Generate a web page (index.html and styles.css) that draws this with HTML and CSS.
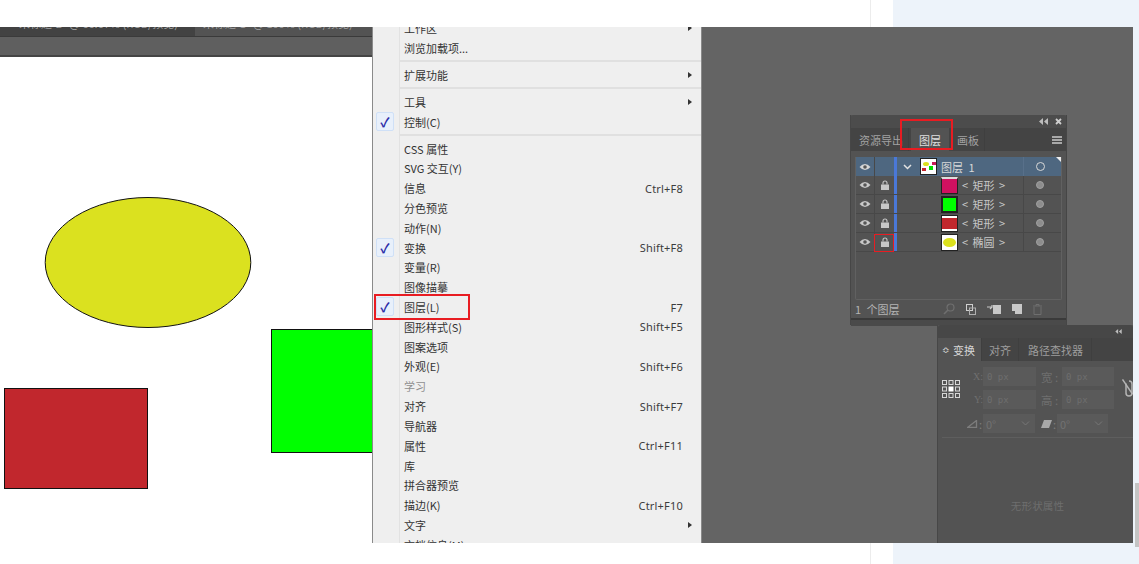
FILE: index.html
```html
<!DOCTYPE html>
<html lang="zh-CN">
<head>
<meta charset="utf-8">
<title>图层面板</title>
<link rel="stylesheet" href="styles.css">
</head>
<body>
<div class="page">
  <div class="article"></div>
  <div class="gutter"></div>
  <div class="side"></div>
  <div class="scroll-thumb"></div>

  <div class="shot">
    <div class="tabbar">
      <div class="doc-tab first"><span>未标题-2* @ 66.67% (RGB/预览)</span></div>
      <div class="doc-tab second"><span>未标题-1* @ 100% (RGB/预览)</span></div>
    </div>
    <div class="ruler"></div>
    <div class="doc"></div>

    <svg class="art" width="372" height="516" viewBox="0 0 372 516">
      <ellipse cx="148" cy="235.500" rx="102.800" ry="65" fill="#dbe11f" stroke="#111" stroke-width="1"/>
      <rect x="271.500" y="302.500" width="102" height="123" fill="#00ff00" stroke="#111" stroke-width="1"/>
      <rect x="4.500" y="361.500" width="143" height="100" fill="#c1272d" stroke="#111" stroke-width="1"/>
    </svg>

    <div class="menu">
      <div class="menu-list">
        <div class="item"><span class="label">工作区</span><i class="arrow"></i></div>
        <div class="item"><span class="label">浏览加载项...</span></div>
        <div class="sep"></div>
        <div class="item"><span class="label">扩展功能</span><i class="arrow"></i></div>
        <div class="sep"></div>
        <div class="item"><span class="label">工具</span><i class="arrow"></i></div>
        <div class="item"><b class="check">✓</b><span class="label">控制(C)</span></div>
        <div class="sep"></div>
        <div class="item"><span class="label">CSS 属性</span></div>
        <div class="item"><span class="label">SVG 交互(Y)</span></div>
        <div class="item"><span class="label">信息</span><span class="key">Ctrl+F8</span></div>
        <div class="item"><span class="label">分色预览</span></div>
        <div class="item"><span class="label">动作(N)</span></div>
        <div class="item"><b class="check">✓</b><span class="label">变换</span><span class="key">Shift+F8</span></div>
        <div class="item"><span class="label">变量(R)</span></div>
        <div class="item"><span class="label">图像描摹</span></div>
        <div class="item"><b class="check">✓</b><span class="label">图层(L)</span><span class="key">F7</span></div>
        <div class="item"><span class="label">图形样式(S)</span><span class="key">Shift+F5</span></div>
        <div class="item"><span class="label">图案选项</span></div>
        <div class="item"><span class="label">外观(E)</span><span class="key">Shift+F6</span></div>
        <div class="item off"><span class="label">学习</span></div>
        <div class="item"><span class="label">对齐</span><span class="key">Shift+F7</span></div>
        <div class="item"><span class="label">导航器</span></div>
        <div class="item"><span class="label">属性</span><span class="key">Ctrl+F11</span></div>
        <div class="item"><span class="label">库</span></div>
        <div class="item"><span class="label">拼合器预览</span></div>
        <div class="item"><span class="label">描边(K)</span><span class="key">Ctrl+F10</span></div>
        <div class="item"><span class="label">文字</span><i class="arrow"></i></div>
        <div class="item"><span class="label">文档信息(M)</span></div>
      </div>
    </div>
    <div class="mark mark-menu"></div>

    <section class="panel layers">
      <header class="panel-top">
        <svg width="9" height="7" viewBox="0 0 9 7"><path d="M4 0v7L0 3.500zM9 0v7L5 3.500z" fill="#bdbdbd"/></svg>
        <svg width="7" height="7" viewBox="0 0 7 7"><path d="M1 1l5 5M6 1l-5 5" stroke="#cfcfcf" stroke-width="1.800"/></svg>
      </header>
      <nav class="panel-tabs">
        <span class="ptab">资源导出</span>
        <span class="ptab on">图层</span>
        <span class="ptab">画板</span>
        <span class="burger"></span>
      </nav>
      <div class="layer-list">
        <div class="row top">
          <span class="cell-eye"><svg class="eye" width="12" height="8" viewBox="0 0 12 8"><path d="M0.500 4Q6 -2 11.500 4Q6 10 0.500 4z" fill="#d6d6d6"/><circle cx="6" cy="4" r="1.800" fill="#555"/></svg></span>
          <span class="cell-lock"></span>
          <span class="bar"></span>
          <svg class="chev" width="9" height="6" viewBox="0 0 9 6"><path d="M1 1l3.500 3.500L8 1" fill="none" stroke="#e2e2e2" stroke-width="1.500"/></svg>
          <span class="thumb thumb-all"><i class="t1"></i><i class="t2"></i><i class="t3"></i><i class="t4"></i></span>
          <span class="name layer-name">图层 1</span>
          <span class="cell-target"><i class="ring"></i></span>
          <i class="corner"></i>
        </div>
        <div class="row">
          <span class="cell-eye"><svg class="eye" width="12" height="8" viewBox="0 0 12 8"><path d="M0.500 4Q6 -2 11.500 4Q6 10 0.500 4z" fill="#c8c8c8"/><circle cx="6" cy="4" r="1.800" fill="#555"/></svg></span>
          <span class="cell-lock"><svg width="8" height="10" viewBox="0 0 8 10"><path d="M2 4.500V3a2 2 0 0 1 4 0v1.500" fill="none" stroke="#c8c8c8" stroke-width="1.100"/><rect y="4.500" width="8" height="5.500" fill="#c8c8c8"/></svg></span>
          <span class="bar"></span>
          <span class="thumb thumb-pink"></span>
          <span class="name">&lt; 矩形 &gt;</span>
          <span class="cell-target"><i class="dot"></i></span>
        </div>
        <div class="row">
          <span class="cell-eye"><svg class="eye" width="12" height="8" viewBox="0 0 12 8"><path d="M0.500 4Q6 -2 11.500 4Q6 10 0.500 4z" fill="#c8c8c8"/><circle cx="6" cy="4" r="1.800" fill="#555"/></svg></span>
          <span class="cell-lock"><svg width="8" height="10" viewBox="0 0 8 10"><path d="M2 4.500V3a2 2 0 0 1 4 0v1.500" fill="none" stroke="#c8c8c8" stroke-width="1.100"/><rect y="4.500" width="8" height="5.500" fill="#c8c8c8"/></svg></span>
          <span class="bar"></span>
          <span class="thumb thumb-green"></span>
          <span class="name">&lt; 矩形 &gt;</span>
          <span class="cell-target"><i class="dot"></i></span>
        </div>
        <div class="row">
          <span class="cell-eye"><svg class="eye" width="12" height="8" viewBox="0 0 12 8"><path d="M0.500 4Q6 -2 11.500 4Q6 10 0.500 4z" fill="#c8c8c8"/><circle cx="6" cy="4" r="1.800" fill="#555"/></svg></span>
          <span class="cell-lock"><svg width="8" height="10" viewBox="0 0 8 10"><path d="M2 4.500V3a2 2 0 0 1 4 0v1.500" fill="none" stroke="#c8c8c8" stroke-width="1.100"/><rect y="4.500" width="8" height="5.500" fill="#c8c8c8"/></svg></span>
          <span class="bar"></span>
          <span class="thumb thumb-red"></span>
          <span class="name">&lt; 矩形 &gt;</span>
          <span class="cell-target"><i class="dot"></i></span>
        </div>
        <div class="row">
          <span class="cell-eye"><svg class="eye" width="12" height="8" viewBox="0 0 12 8"><path d="M0.500 4Q6 -2 11.500 4Q6 10 0.500 4z" fill="#c8c8c8"/><circle cx="6" cy="4" r="1.800" fill="#555"/></svg></span>
          <span class="cell-lock"><svg width="8" height="10" viewBox="0 0 8 10"><path d="M2 4.500V3a2 2 0 0 1 4 0v1.500" fill="none" stroke="#c8c8c8" stroke-width="1.100"/><rect y="4.500" width="8" height="5.500" fill="#c8c8c8"/></svg></span>
          <span class="bar"></span>
          <span class="thumb thumb-ellipse"><i></i></span>
          <span class="name">&lt; 椭圆 &gt;</span>
          <span class="cell-target"><i class="dot"></i></span>
        </div>
      </div>
      <footer class="layer-foot">
        <span class="count">1 个图层</span>
        <span class="tools">
          <svg width="12" height="12" viewBox="0 0 12 12"><circle cx="7.500" cy="4.500" r="3.500" fill="none" stroke="#6f6f6f" stroke-width="1.200"/><path d="M5 7l-4 4" stroke="#6f6f6f" stroke-width="1.600"/></svg>
          <svg width="10" height="11" viewBox="0 0 10 11"><rect x="0.500" y="0.500" width="6" height="6" fill="#555" stroke="#cfcfcf"/><rect x="3.500" y="4" width="6" height="6.500" fill="none" stroke="#b0b0b0"/></svg>
          <svg width="14" height="10" viewBox="0 0 14 10"><rect x="6" y="1" width="8" height="9" fill="#c8c8c8"/><path d="M0 3h5v-2M5 3l-2 2" fill="none" stroke="#c8c8c8" stroke-width="1.200"/></svg>
          <svg width="10" height="10" viewBox="0 0 10 10"><path d="M0 0h10v10H3V7H0z" fill="#c8c8c8"/></svg>
          <svg width="9" height="11" viewBox="0 0 9 11"><path d="M0 2h9M3 2V0.500h3V2M1 3v7.500h7V3" fill="none" stroke="#6f6f6f"/></svg>
        </span>
      </footer>
      <div class="grip"></div>
    </section>

    <section class="panel transform">
      <header class="panel-top short">
        <svg width="7" height="5" viewBox="0 0 9 7"><path d="M4 0v7L0 3.500zM9 0v7L5 3.500z" fill="#bdbdbd"/></svg>
      </header>
      <nav class="panel-tabs tabs-two">
        <span class="ptab on"><em class="updown">≎</em>变换</span>
        <span class="ptab">对齐</span>
        <span class="ptab">路径查找器</span>
      </nav>
      <div class="fields">
        <svg class="refpoint" width="18" height="18" viewBox="0 0 18 18">
          <g fill="none" stroke="#d6d6d6"><rect x="0.500" y="0.500" width="4" height="4"/><rect x="7" y="0.500" width="4" height="4"/><rect x="13.500" y="0.500" width="4" height="4"/><rect x="0.500" y="7" width="4" height="4"/><rect x="13.500" y="7" width="4" height="4"/><rect x="0.500" y="13.500" width="4" height="4"/><rect x="7" y="13.500" width="4" height="4"/><rect x="13.500" y="13.500" width="4" height="4"/></g>
          <rect x="6.500" y="6.500" width="5" height="5" fill="#fff"/>
        </svg>
        <div class="field-grid">
          <span class="f-label">X:</span><span class="field">0 px</span>
          <span class="f-label wide">宽 :</span><span class="field">0 px</span>
          <span class="f-label">Y:</span><span class="field">0 px</span>
          <span class="f-label wide">高 :</span><span class="field">0 px</span>
        </div>
        <div class="select-row">
          <svg width="11" height="8" viewBox="0 0 11 8"><path d="M0.500 7.500L9.500 0.500v7z" fill="none" stroke="#7d7d7d" stroke-width="1.300"/></svg><span class="colon">:</span>
          <span class="select">0°<svg width="9" height="5" viewBox="0 0 9 5"><path d="M1 0.500l3.500 3.500L8 0.500" fill="none" stroke="#777"/></svg></span>
          <svg class="skew" width="11" height="8" viewBox="0 0 11 8"><path d="M3 0h8L8 8H0z" fill="#a8a8a8"/></svg><span class="colon">:</span>
          <span class="select s2">0°<svg width="9" height="5" viewBox="0 0 9 5"><path d="M1 0.500l3.500 3.500L8 0.500" fill="none" stroke="#777"/></svg></span>
        </div>
        <svg class="chain" width="11" height="18" viewBox="0 0 11 18"><g fill="none" stroke="#b4b4b4" stroke-width="1.500"><path d="M0.500 0.500L10.500 15"/><path d="M4 4.500V14a3 3 0 0 0 6 0V5a3 3 0 0 0-3-3"/></g></svg>
      </div>
      <div class="empty">无形状属性</div>
    </section>

    <div class="mark mark-tab"></div>
    <div class="mark mark-lock"></div>
  </div>
</div>
</body>
</html>
```
FILE: styles.css
```css
html, body { margin: 0; padding: 0; background: #fff; }
body { font-family: "Noto Sans CJK SC", "Liberation Sans", sans-serif; }
.page { position: relative; display: flex; width: 1139px; height: 564px; overflow: hidden; }
.article { width: 870px; background: #fff; }
.gutter { width: 22px; background: #fff; border-left: 1px solid #ececec; }
.side { flex: 1; background: #edf3fa; }
.scroll-thumb { position: absolute; left: 1135px; top: 483px; width: 4px; height: 64px; background: #c4c4c4; }

.shot { position: absolute; left: 0; top: 27px; width: 1133px; height: 516px; overflow: hidden; background: #646464; }
.tabbar { display: flex; width: 372px; height: 10px; background: #424242; border-bottom: 1px solid #3a3a3a; box-sizing: border-box; }
.doc-tab { height: 9px; overflow: hidden; font-size: 11px; line-height: 11px; color: #a4a4a4; white-space: nowrap; }
.doc-tab span { display: block; margin-top: -9px; }
.doc-tab.first { width: 195px; padding-left: 19px; box-sizing: border-box; }
.doc-tab.second { width: 177px; padding-left: 8px; box-sizing: border-box; background: #535353; }
.ruler { width: 372px; height: 20px; background: #5f5f5f; border-bottom: 2px solid #444; box-sizing: border-box; }
.doc { width: 372px; height: 486px; background: #fff; }
.art { position: absolute; left: 0; top: 0; }

.menu { position: absolute; left: 372px; top: 0; width: 330px; height: 516px; box-sizing: border-box; overflow: hidden; background: #efefef; border-left: 1px solid #8a8a8a; border-right: 1px solid #8a8a8a; }
.menu::before { content: ""; position: absolute; left: 26px; top: 0; bottom: 0; width: 1px; background: #e2e2e2; }
.menu-list { margin-top: -9px; padding-left: 27px; }
.item { position: relative; display: flex; align-items: center; height: 19.820px; padding-left: 4px; padding-right: 18px; font-size: 11px; color: #333; }
.item .label { flex: 1; white-space: nowrap; }
.item.off { color: #8f8f8f; }
.key { color: #3c3c3c; letter-spacing: 0.200px; font-family: "Noto Sans", "Liberation Sans", sans-serif; }
.arrow { width: 0; height: 0; margin-right: -9px; border-left: 4px solid #333; border-top: 3px solid transparent; border-bottom: 3px solid transparent; }
.sep { height: 2px; margin: 2.600px 0; background: #e0e0e0; }
.check { position: absolute; left: -24px; top: 0; width: 18px; height: 19px; box-sizing: border-box; text-align: center; line-height: 18px; font-size: 13px; color: #2b2ba8; background: #e8f0fb; border: 1px solid #cfe0f7; border-radius: 2px; }

.mark { position: absolute; box-sizing: border-box; border: 2px solid #e81c22; pointer-events: none; }
.mark-menu { left: 374px; top: 267px; width: 96px; height: 26px; }
.mark-tab { left: 900px; top: 92px; width: 53px; height: 31px; }
.mark-lock { left: 874px; top: 207px; width: 20px; height: 18px; border-width: 1px; }

.panel { position: absolute; box-sizing: border-box; background: #535353; color: #c4c4c4; }
.panel-top { display: flex; justify-content: flex-end; align-items: center; gap: 7px; height: 13px; padding-right: 4px; background: #4c4c4c; border-radius: 3px 3px 0 0; }
.panel-tabs { display: flex; align-items: stretch; height: 23px; background: #444; font-size: 11px; }
.ptab { display: flex; align-items: center; padding: 0 6px; color: #a2a2a2; border-right: 1px solid #3f3f3f; white-space: nowrap; }
.ptab.on { background: #535353; color: #e0e0e0; }

.layers { left: 850px; top: 88px; width: 217px; height: 210px; border: 1px solid #464646; border-top: 0; }
.layers .panel-tabs { padding-left: 3px; }
.layers .ptab { padding: 0 5px; }
.layers .ptab.on { width: 38px; margin-left: 2px; box-sizing: border-box; justify-content: center; padding: 0; border-right: 0; }
.layers .ptab.on + .ptab { padding-left: 8px; }
.burger { margin-left: auto; margin-right: 4px; margin-top: 8px; width: 10px; height: 2px; background: #a8a8a8; box-shadow: 0 3px 0 #a8a8a8, 0 6px 0 #a8a8a8; }
.layer-list { margin: 6px 4px 0 4px; height: 143px; border: 1px solid #616161; border-top: 0; border-radius: 0 0 2px 2px; box-sizing: border-box; }
.row { position: relative; display: flex; align-items: center; height: 19px; border-bottom: 1px solid #484848; box-sizing: border-box; font-size: 11px; color: #c8c8c8; }
.row.top { background: #4e6780; border-bottom: 0; color: #d8d8d8; }
.cell-eye { display: flex; justify-content: center; align-items: center; width: 19px; height: 100%; border-right: 1px solid #484848; box-sizing: border-box; }
.cell-lock { display: flex; justify-content: center; align-items: center; width: 19px; height: 100%; box-sizing: border-box; }
.bar { width: 3px; height: 100%; background: #4a78d8; margin-right: 2px; flex: none; }
.chev { margin-left: 4px; margin-right: 8px; }
.thumb { position: relative; display: block; flex: none; width: 17px; height: 17px; box-sizing: border-box; border: 1px solid #222; background: #fff; }
.row:not(.top) .thumb { margin-left: 42px; }
.thumb-pink { background: #cf1160; border-top: 2px solid #ddd; }
.thumb-green { background: #00ff00; border: 2px solid #222; }
.thumb-red { background: #c1272d; border-top: 3px solid #fff; border-bottom: 3px solid #fff; outline: 1px solid #222; outline-offset: -1px; }
.thumb-ellipse i { position: absolute; left: 1px; top: 3px; width: 13px; height: 9px; border-radius: 50%; background: #dce21e; }
.thumb-all i { position: absolute; display: block; }
.t1 { left: 2px; top: 3px; width: 6px; height: 4px; border-radius: 50%; background: #dce21e; }
.t2 { left: 8px; top: 7px; width: 4px; height: 4px; background: #00e000; }
.t3 { left: 1px; top: 9px; width: 4px; height: 3px; background: #c1272d; }
.t4 { left: 11px; top: 3px; width: 4px; height: 3px; background: #c81a5a; }
.name { margin-left: 4px; flex: 1; white-space: nowrap; word-spacing: 2px; }
.layer-name { word-spacing: 3px; }
.cell-target { display: flex; justify-content: center; align-items: center; width: 33px; height: 100%; border-left: 1px solid #484848; box-sizing: border-box; margin-right: 5px; }
.row.top .cell-target { border-left-color: #58708a; }
.ring { width: 7px; height: 7px; border-radius: 50%; border: 1px solid #d8d8d8; }
.dot { width: 8px; height: 8px; border-radius: 50%; background: #8d8d8d; border: 1px solid #a0a0a0; box-sizing: border-box; }
.corner { position: absolute; right: 0; top: 0; width: 0; height: 0; border-top: 5px solid #eee; border-left: 5px solid transparent; }
.layer-foot { display: flex; align-items: center; justify-content: space-between; height: 18px; padding: 0 24px 0 4px; font-size: 11px; color: #b4b4b4; word-spacing: 3px; }
.tools { display: flex; align-items: center; gap: 11px; }
.grip { height: 8px; background: #4a4a4a; border-top: 2px solid #3a3a3a; box-sizing: border-box; }

.transform { left: 937px; top: 298px; width: 196px; height: 218px; border-left: 1px solid #474747; }
.panel-top.short { padding-right: 11px; background: #474747; }
.tabs-two { font-size: 11px; }
.tabs-two .ptab { padding: 0 7px; color: #9d9d9d; }
.tabs-two .ptab.on { padding: 0 6px 0 4px; color: #d6d6d6; }
.tabs-two .ptab:last-child { padding: 0 8px 0 9px; }
.updown { font-style: normal; margin-right: 3px; font-size: 9px; }
.fields { position: relative; height: 77px; margin-left: 4px; padding: 6px 0 0 41px; border-bottom: 1px solid #5e5e5e; box-sizing: border-box; }
.refpoint { position: absolute; left: 0; top: 19px; }
.chain { position: absolute; left: 180px; top: 18px; }
.field-grid { display: grid; grid-template-columns: 0 53px 26px 52px; grid-auto-rows: 19px; row-gap: 4px; font-family: "Liberation Serif", serif; font-size: 10px; color: #6f6f6f; }
.f-label { display: flex; align-items: center; justify-content: flex-end; padding-right: 1px; white-space: nowrap; }
.f-label.wide { font-size: 11.500px; font-family: "Noto Sans CJK SC", sans-serif; justify-content: flex-start; padding-left: 5px; }
.field { display: flex; align-items: center; padding-left: 4px; background: #5a5a5a; color: #6e6e6e; font-family: "DejaVu Sans Mono", monospace; font-size: 9px; }
.select-row { display: flex; align-items: center; margin: 5px 0 0 -16px; height: 19px; color: #7d7d7d; font-size: 11px; }
.colon { margin: 0 1px; width: 3px; flex: none; }
.select { display: flex; align-items: center; justify-content: space-between; width: 52px; height: 19px; padding: 0 5px 0 3px; box-sizing: border-box; background: #5a5a5a; color: #727272; flex: none; }
.select.s2 { width: 51px; }
.skew { margin-left: 6px; flex: none; }
.empty { margin-top: 60px; margin-left: 4px; text-align: center; font-size: 10.500px; color: #6e6e6e; letter-spacing: 0.200px; }
```
